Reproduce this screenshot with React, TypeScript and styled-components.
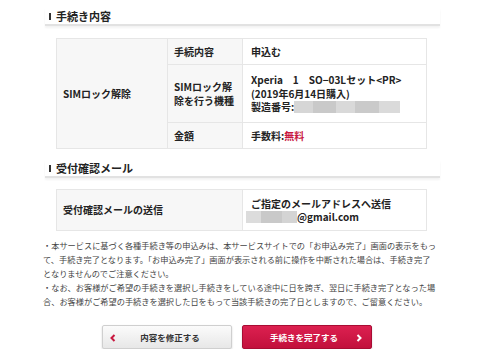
import React from "react";
import styled, { createGlobalStyle } from "styled-components";

const font = `"Noto Sans CJK JP", "Liberation Sans", sans-serif`;

const GlobalStyle = createGlobalStyle`
  html, body {
    margin: 0;
    padding: 0;
    background: #fff;
    font-family: ${font};
    color: #222;
  }
`;

const Page = styled.div`
  width: 395px;
  padding: 8px 0 0 45px;
`;

const SectionHeader = styled.h2<{ $gap?: number }>`
  margin: ${(p) => p.$gap ?? 0}px 0 0;
  height: 16px;
  display: flex;
  align-items: center;
  gap: 5px;
  padding-left: 4px;
  font-size: 11px;
  line-height: 16px;
  font-weight: bold;
  color: #222;
  border-bottom: 2px solid #e2e2e2;
  box-shadow: 0 2px 2px #f3f3f3;
  &::before {
    content: "";
    width: 2px;
    height: 7px;
    background: #333;
  }
`;

const Table = styled.table<{ $top: number }>`
  margin: ${(p) => p.$top}px 0 0 11px;
  width: 371px;
  border-collapse: collapse;
  font-size: 10px;
  line-height: 13.5px;
  font-weight: bold;
  color: #222;
  td, th {
    border: 1px solid #e6e6e6;
    padding: 0 6px;
    text-align: left;
    vertical-align: middle;
  }
`;

const Label = styled.th<{ $w: number }>`
  width: ${(p) => p.$w}px;
  background: #f7f7f7;
  box-sizing: border-box;
`;

const Value = styled.td<{ $h?: number }>`
  background: #fff;
  height: ${(p) => p.$h ?? 24}px;
  padding-left: 8px !important;
`;

const Free = styled.span`
  color: #c8173f;
`;

const Blur = styled.span<{ $w: number }>`
  display: inline-block;
  vertical-align: -2px;
  width: ${(p) => p.$w}px;
  height: 12px;
  background: linear-gradient(
    to right,
    #d6d6d6 0 18%,
    #c9c9c9 18% 40%,
    #d9d9d9 40% 58%,
    #cacaca 58% 80%,
    #dadada 80% 100%
  );
`;

const EmailBlur = styled(Blur)`
  margin-left: -5px;
  background: linear-gradient(
    to right,
    #dcdcdc 0 30%,
    #c9c9c9 30% 70%,
    #d4d4d4 70% 100%
  );
`;

const Notes = styled.p`
  margin: 7px 0 0 -2px;
  font-size: 8.2px;
  line-height: 14px;
  color: #444;
  white-space: nowrap;
`;

const Buttons = styled.div`
  display: flex;
  gap: 10px;
  margin: 17px 0 0 57px;
`;

const Button = styled.button<{ $primary?: boolean }>`
  position: relative;
  width: 130px;
  height: 24px;
  border-radius: 2px;
  font-family: ${font};
  font-size: 8.5px;
  font-weight: bold;
  cursor: pointer;
  border: 1px solid ${(p) => (p.$primary ? "#a80c33" : "#cfcfcf")};
  color: ${(p) => (p.$primary ? "#fff" : "#333")};
  background: ${(p) =>
    p.$primary
      ? "linear-gradient(#dc2050, #c2103c)"
      : "linear-gradient(#fbfbfb, #e7e7e7)"};
  box-shadow: 0 1px 2px rgba(0, 0, 0, 0.18);
  display: flex;
  align-items: center;
  justify-content: center;
  padding: 0;
`;

const Chevron = styled.svg<{ $side: "left" | "right" }>`
  position: absolute;
  top: 8px;
  ${(p) => (p.$side === "left" ? "left: 7px;" : "right: 9px;")}
`;

const ButtonText = styled.span<{ $shift: number }>`
  margin-left: ${(p) => p.$shift}px;
`;

export default function App() {
  return (
    <>
      <GlobalStyle />
      <Page>
        <SectionHeader>手続き内容</SectionHeader>
        <Table $top={12}>
          <tbody>
            <tr>
              <Label $w={111} rowSpan={3}>
                SIMロック解除
              </Label>
              <Label $w={75}>手続内容</Label>
              <Value $h={25}>申込む</Value>
            </tr>
            <tr>
              <Label $w={75}>
                SIMロック解
                <br />
                除を行う機種
              </Label>
              <Value $h={57}>
                Xperia　1　SO−03Lセット&lt;PR&gt;
                <br />
                (2019年6月14日購入)
                <br />
                製造番号:<Blur $w={106} />
              </Value>
            </tr>
            <tr>
              <Label $w={75}>金額</Label>
              <Value $h={25}>
                手数料:<Free>無料</Free>
              </Value>
            </tr>
          </tbody>
        </Table>
        <SectionHeader $gap={11}>受付確認メール</SectionHeader>
        <Table $top={11}>
          <tbody>
            <tr>
              <Label $w={186}>受付確認メールの送信</Label>
              <Value $h={40}>
                ご指定のメールアドレスへ送信
                <br />
                <EmailBlur $w={51} />
                @gmail.com
              </Value>
            </tr>
          </tbody>
        </Table>
        <Notes>
          ・本サービスに基づく各種手続き等の申込みは、本サービスサイトでの「お申込み完了」画面の表示をもっ
          <br />
          て、手続き完了となります。「お申込み完了」画面が表示される前に操作を中断された場合は、手続き完了
          <br />
          となりませんのでご注意ください。
          <br />
          ・なお、お客様がご希望の手続きを選択し手続きをしている途中に日を跨ぎ、翌日に手続き完了となった場
          <br />
          合、お客様がご希望の手続きを選択した日をもって当該手続きの完了日としますので、ご留意ください。
        </Notes>
        <Buttons>
          <Button>
            <Chevron $side="left" width="6" height="8" viewBox="0 0 6 8">
              <path d="M4.5 1 L1.5 4 L4.5 7" fill="none" stroke="#c8173f" strokeWidth="2" />
            </Chevron>
            <ButtonText $shift={6}>内容を修正する</ButtonText>
          </Button>
          <Button $primary>
            <ButtonText $shift={-6}>手続きを完了する</ButtonText>
            <Chevron $side="right" width="6" height="8" viewBox="0 0 6 8">
              <path d="M1.5 1 L4.5 4 L1.5 7" fill="none" stroke="#fff" strokeWidth="2" />
            </Chevron>
          </Button>
        </Buttons>
      </Page>
    </>
  );
}
